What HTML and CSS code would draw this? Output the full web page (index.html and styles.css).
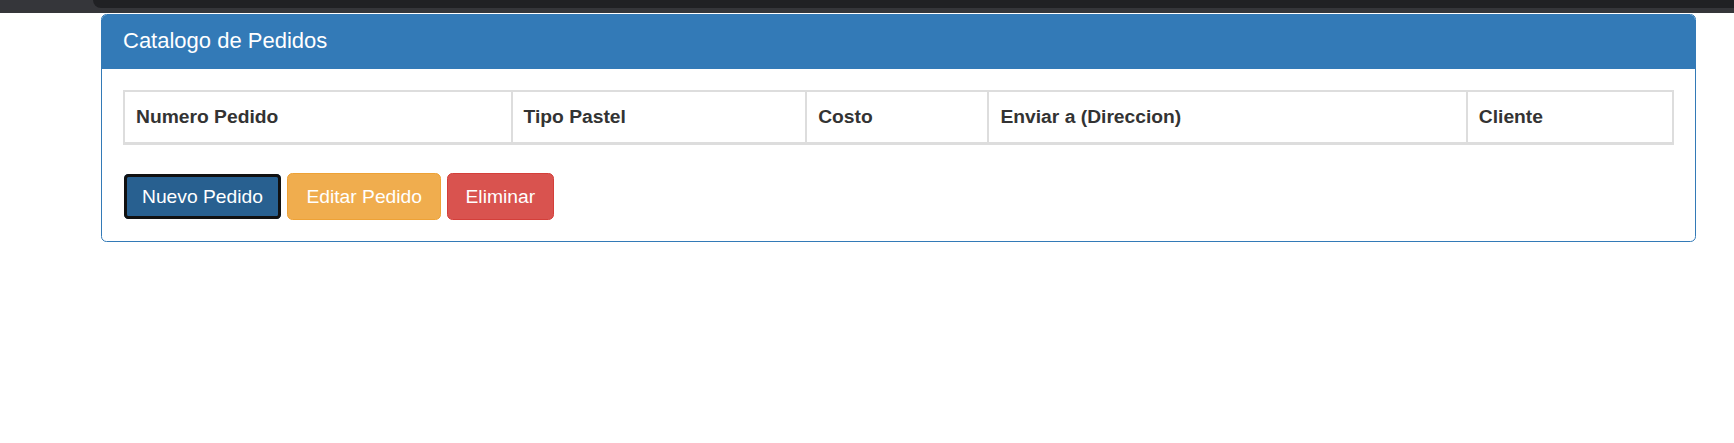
FILE: index.html
```html
<!DOCTYPE html>
<html lang="es">
<head>
<meta charset="utf-8">
<title>Catalogo de Pedidos</title>
<link rel="stylesheet" href="styles.css">
</head>
<body>
  <div class="topbar"><div class="topbar-tab"></div></div>
  <div class="panel">
    <div class="panel-heading">Catalogo de Pedidos</div>
    <div class="panel-body">
      <table class="grid-table">
        <thead>
          <tr>
            <th class="col-num">Numero Pedido</th>
            <th class="col-tipo">Tipo Pastel</th>
            <th class="col-costo">Costo</th>
            <th class="col-dir">Enviar a (Direccion)</th>
            <th class="col-cliente">Cliente</th>
          </tr>
        </thead>
        <tbody></tbody>
      </table>
      <div class="actions">
        <button class="btn btn-primary btn-focus">Nuevo Pedido</button>
        <button class="btn btn-warning">Editar Pedido</button>
        <button class="btn btn-danger">Eliminar</button>
      </div>
    </div>
  </div>
</body>
</html>
```

FILE: styles.css
```css
* { box-sizing: border-box; }

html, body {
  margin: 0;
  padding: 0;
  background: #ffffff;
  font-family: "Liberation Sans", Arial, sans-serif;
  color: #333333;
}

.topbar {
  height: 13px;
  background: #35363a;
  display: flex;
  padding-left: 93px;
}

.topbar-tab {
  flex: 1;
  height: 8px;
  background: #202124;
  border-bottom-left-radius: 8px;
}

.panel {
  margin: 1px 0 0 101px;
  width: 1595px;
  border: 1px solid #337ab7;
  border-radius: 5.5px;
  background: #ffffff;
}

.panel-heading {
  background: #337ab7;
  color: #ffffff;
  font-size: 22px;
  line-height: 25px;
  padding: 13px 20px 15px 21px;
  border-bottom: 1px solid #337ab7;
  border-top-left-radius: 4.5px;
  border-top-right-radius: 4.5px;
}

.panel-body {
  padding: 21px 21px 21px 21px;
}

.grid-table {
  width: 100%;
  border-collapse: collapse;
  table-layout: fixed;
  border: 2px solid #dddddd;
  margin-bottom: 28px;
}

.grid-table th {
  text-align: left;
  font-weight: bold;
  font-size: 19.25px;
  line-height: 27.5px;
  color: #333333;
  padding: 11px 11px;
  border: 2px solid #dddddd;
  border-bottom-width: 3px;
  white-space: nowrap;
}

.col-num { width: 25.02%; }
.col-tipo { width: 19.02%; }
.col-costo { width: 11.77%; }
.col-dir { width: 30.88%; }
.col-cliente { width: 13.31%; }

.actions {
  display: flex;
  gap: 5.5px;
}

.btn {
  font-family: "Liberation Sans", Arial, sans-serif;
  font-size: 19.25px;
  line-height: 27px;
  padding: 9px 18px;
  border: 1px solid transparent;
  border-radius: 5.5px;
  color: #ffffff;
  cursor: pointer;
}

.btn-primary {
  background: #286090;
  border-color: #204d74;
}

.btn-focus {
  border-color: transparent;
  background-clip: padding-box;
  outline: 3px solid #111111;
  outline-offset: -4px;
}

.btn-warning {
  background: #f0ad4e;
  border-color: #eea236;
}

.btn-danger {
  background: #d9534f;
  border-color: #d43f3a;
}
```
